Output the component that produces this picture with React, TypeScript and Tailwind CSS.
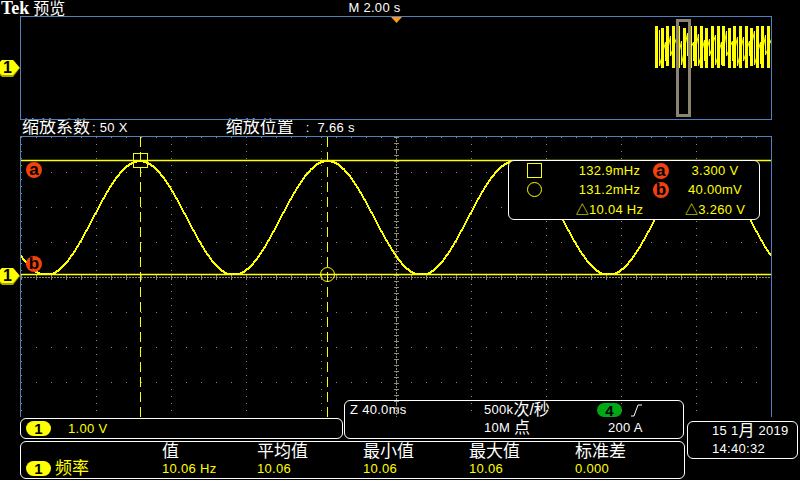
const FONT = "font-['Liberation_Sans','Noto_Sans_CJK_SC',sans-serif]";
const NUM = "text-[13px] tracking-[0.3px]";

// scope trace: clipped cosine, stepped to whole pixels like the instrument draws it
function sinePath() {
  let d = "";
  for (let x = 0; x <= 750; x++) {
    const raw = 81 - 57 * Math.cos((2 * Math.PI * (x + 21 - 140)) / 187.5);
    const y = Math.min(137, Math.max(24, Math.round(raw)));
    d += `${x === 0 ? "M" : "L"}${x} ${y}`;
  }
  return d;
}

// aliased acquisition in the overview, a fixed pattern of bars
function overviewPath() {
  let bars = "";
  let inner = "";
  for (let i = 0; i < 21; i++) {
    const x = Math.round(i * 5.6) + 2.5;
    bars += `M${x} ${i % 4 === 1 ? 2 : 0}V${i % 5 === 2 ? 40 : 42}`;
    const top = 4 + 12 * Math.abs(Math.sin(i * 1.3));
    const bottom = 27 + 13 * Math.abs(Math.cos(i * 0.9));
    inner += `${i === 0 ? "M" : "L"}${x + 3} ${Math.round(top)}V${Math.round(bottom)}`;
  }
  return { bars, inner };
}

function Grid() {
  const dots: { x: number; y: number }[] = [];
  const xs = Array.from({ length: 11 }, (_, i) => i * 75);
  const ys = Array.from({ length: 9 }, (_, i) => i * 35);
  for (const y of ys) for (let x = 0; x < 750; x += 15) dots.push({ x, y });
  for (const x of xs) for (let y = 0; y < 280; y += 7) dots.push({ x, y });
  const centerX: number[] = [];
  const centerY: number[] = [];
  for (let x = 0; x < 750; x += 3) centerX.push(x);
  for (let y = 0; y < 280; y += 3) centerY.push(y);
  return (
    <g fill="#8f8a72">
      {dots.map((d, i) => (
        <rect key={i} x={d.x} y={d.y} width="1" height="1" />
      ))}
      {centerX.map((x) => (
        <rect key={x} x={x} y="140" width="2" height="1" />
      ))}
      {centerY.map((y) => (
        <rect key={y} x="375" y={y} width="1" height="2" />
      ))}
      {centerX.filter((x) => x % 15 === 0).map((x) => (
        <rect key={x} x={x} y="138" width="1" height="5" />
      ))}
      {centerY.filter((y) => y % 6 === 0).map((y) => (
        <rect key={y} x="373" y={y} width="5" height="1" />
      ))}
    </g>
  );
}

function ChannelBadge() {
  return (
    <span className="flex h-[15px] w-[25px] items-center justify-center rounded-full bg-[#ffff00] text-[15px] font-bold leading-none text-black">
      1
    </span>
  );
}

function LevelMarker({ className }: { className: string }) {
  return (
    <div className={`absolute left-0 flex h-[17px] w-[20px] items-center ${className}`}>
      <svg className="absolute inset-0" width="20" height="17" viewBox="0 0 20 17">
        <path d="M0 2L2 0H13L20 8L13 17H2L0 15Z" fill="#a8a800" />
        <path d="M0 2L2 0H13L19.5 7.5L13 15H2L0 13Z" fill="#ffff00" />
      </svg>
      <span className="relative ml-[3px] -mt-[2px] text-[16px] font-bold leading-none text-black">1</span>
    </div>
  );
}

function CursorBadge({ label, className = "" }: { label: string; className?: string }) {
  return (
    <span
      className={`flex h-[16px] w-[16px] items-center justify-center rounded-full bg-[#f4400c] pb-[1px] text-[17px] font-bold leading-none text-black ${className}`}
    >
      {label}
    </span>
  );
}

// CJK inside a number line: larger glyphs, kept on the line's centre
function Cjk({ children }: { children: string }) {
  return <span className="relative top-[1px] text-[16px] leading-[16px] tracking-normal">{children}</span>;
}

const READINGS = [
  { freq: "132.9mHz", badge: "a", volt: "3.300 V" },
  { freq: "131.2mHz", badge: "b", volt: "40.00mV" },
];

const STATS = [
  { label: "值", value: "10.06 Hz", w: "w-[95px]" },
  { label: "平均值", value: "10.06", w: "w-[106px]" },
  { label: "最小值", value: "10.06", w: "w-[106px]" },
  { label: "最大值", value: "10.06", w: "w-[106px]" },
  { label: "标准差", value: "0.000", w: "w-[100px]" },
];

export default function App() {
  const ov = overviewPath();
  return (
    <div className={`relative flex h-[480px] w-[800px] flex-col overflow-hidden bg-black text-white ${FONT}`}>
      {/* header */}
      <div className="relative flex h-[16px] items-end text-[16px] leading-[15px]">
        <span className="ml-[1px] font-['Liberation_Serif',serif] text-[18px] font-bold">Tek</span>
        <span className="ml-[4px]">预览</span>
        <span className={`mb-[1px] ml-[283px] ${NUM}`}>M 2.00 s</span>
      </div>

      {/* overview */}
      <div className="relative ml-[20px] h-[104px] w-[752px] border border-[#4f81bd]">
        <svg className="absolute left-[633px] top-[9px]" width="117" height="42" viewBox="0 0 117 42">
          <path d={ov.bars} stroke="#ffff00" strokeWidth="3" fill="none" />
          <path d={ov.inner} stroke="#ffff00" fill="none" />
        </svg>
        <div className="absolute left-[655px] top-[2px] h-[98px] w-[15px] border-[3px] border-[#8c8470]" />
      </div>
      <svg className="absolute left-[391px] top-[17px]" width="11" height="6" viewBox="0 0 11 6">
        <path d="M0 0H11L5.5 6Z" fill="#ff9a1a" />
      </svg>
      <LevelMarker className="top-[60px]" />

      {/* zoom info */}
      <div className="flex h-[16px] items-center text-[17px] leading-[16px]">
        <span className="ml-[22px]">缩放系数</span>
        <span className={`ml-[2px] whitespace-pre ${NUM}`}>: 50 X</span>
        <span className="ml-[98px]">缩放位置</span>
        <span className={`ml-[12px] whitespace-pre ${NUM}`}>:  7.66 s</span>
      </div>

      {/* plot */}
      <div className="relative ml-[20px] h-[281px] w-[752px] border-x border-t border-[#4f81bd]">
        <svg className="absolute left-0 top-0" width="750" height="280" viewBox="0 0 750 280">
          <Grid />
          <path d={sinePath()} stroke="#ffff00" strokeWidth="2" fill="none" shapeRendering="crispEdges" />
          <path d="M0 23.5H750M0 137.5H750" stroke="#ffff00" strokeWidth="1.5" />
          <path d="M119.5 0V280M306.5 0V280" stroke="#ffff00" strokeDasharray="10 5" />
          <rect x="112.5" y="16.5" width="14" height="14" stroke="#ffff00" fill="none" />
          <circle cx="306.5" cy="137.5" r="7" stroke="#ffff00" fill="none" />
        </svg>
        <CursorBadge label="a" className="absolute left-[5px] top-[25px]" />
        <CursorBadge label="b" className="absolute left-[5px] top-[119px]" />

        {/* cursor readout */}
        <div className={`absolute left-[487px] top-[23px] grid h-[60px] w-[252px] grid-cols-[65px_71px_32px_76px] grid-rows-3 items-center rounded-[6px] border border-white bg-black text-center leading-none text-[#ffff00] ${NUM}`}>
          {READINGS.map((r, i) => (
            <div key={r.badge} className="contents">
              <div className="pl-[18px]">
                {i === 0 ? (
                  <span className="block h-[15px] w-[15px] border border-[#ffff00]" />
                ) : (
                  <span className="block h-[15px] w-[15px] rounded-full border border-[#ffff00]" />
                )}
              </div>
              <span className="whitespace-nowrap">{r.freq}</span>
              <CursorBadge label={r.badge} className="justify-self-center" />
              <span className="whitespace-nowrap">{r.volt}</span>
            </div>
          ))}
          <span />
          <span className="whitespace-nowrap">△10.04 Hz</span>
          <span />
          <span className="whitespace-nowrap">△3.260 V</span>
        </div>
      </div>
      <LevelMarker className="top-[268px]" />

      {/* bottom panels */}
      <div className="flex">
        <div className="ml-[20px] flex w-[665px] flex-col">
          <div className="flex">
            <div className="mt-[1px] flex h-[21px] w-[323px] items-center rounded-[6px] border border-white pl-[5px] text-[#ffff00]">
              <ChannelBadge />
              <span className={`ml-[17px] ${NUM}`}>1.00 V</span>
            </div>
            <div className={`-mt-[17px] ml-[1px] flex h-[39px] w-[340px] rounded-[6px] border border-white bg-black pl-[5px] leading-[18px] ${NUM}`}>
              <span className="w-[134px]">Z 40.0ms</span>
              <div className="flex w-[113px] flex-col">
                <span className="h-[18px] whitespace-nowrap">500k<Cjk>次/秒</Cjk></span>
                <span className="h-[18px] whitespace-nowrap">10M <Cjk>点</Cjk></span>
              </div>
              <div className="flex flex-col">
                <div className="flex h-[18px] items-center">
                  <span className="flex h-[14px] w-[25px] items-center justify-center rounded-full bg-[#00a814] text-[15px] font-bold leading-none text-black">
                    4
                  </span>
                  <svg className="ml-[9px]" width="12" height="13" viewBox="0 0 12 13">
                    <path d="M0 12H3L7 1H11" stroke="#fff" fill="none" />
                  </svg>
                </div>
                <span className="ml-[11px] whitespace-nowrap">200 A</span>
              </div>
            </div>
          </div>
          <div className="mt-[2px] flex h-[38px] w-[665px] items-stretch rounded-[6px] border border-white text-[17px] leading-none">
            <div className="flex w-[141px] flex-col justify-end pb-[1px] pl-[5px]">
              <div className="flex items-center text-[#ffff00]">
                <ChannelBadge />
                <span className="ml-[4px]">频率</span>
              </div>
            </div>
            {STATS.map((s) => (
              <div key={s.label} className={`flex flex-col pt-[1px] ${s.w}`}>
                <span className="h-[18px]">{s.label}</span>
                <span className={`leading-[16px] text-[#ffff00] ${NUM}`}>{s.value}</span>
              </div>
            ))}
          </div>
        </div>
        <div className={`ml-[2px] mt-[4px] flex h-[38px] w-[111px] flex-col justify-center rounded-[6px] border border-white pl-[24px] leading-[18px] ${NUM}`}>
          <span className="h-[18px] whitespace-nowrap">15 1<Cjk>月</Cjk> 2019</span>
          <span>14:40:32</span>
        </div>
      </div>
    </div>
  );
}
